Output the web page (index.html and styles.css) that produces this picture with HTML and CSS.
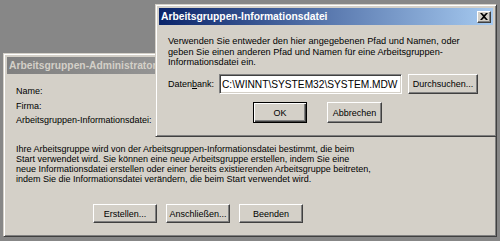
FILE: index.html
```html
<!DOCTYPE html>
<html lang="de">
<head>
    <meta charset="UTF-8">
    <title>Arbeitsgruppen-Administrator</title>
    <link rel="stylesheet" href="styles.css">
</head>
<body>
    <div class="desktop">
        <div class="window back">
            <div class="titlebar inactive"><span>Arbeitsgruppen-Administrator</span></div>
            <div class="body">
                <div class="fields">
                    <div>Name:</div>
                    <div>Firma:</div>
                    <div>Arbeitsgruppen-Informationsdatei:</div>
                </div>
                <p class="info">Ihre Arbeitsgruppe wird von der Arbeitsgruppen-Informationsdatei bestimmt, die beim<br>Start verwendet wird. Sie können eine neue Arbeitsgruppe erstellen, indem Sie eine<br>neue Informationsdatei erstellen oder einer bereits existierenden Arbeitsgruppe beitreten,<br>indem Sie die Informationsdatei verändern, die beim Start verwendet wird.</p>
                <div class="buttons back-buttons">
                    <button class="btn">Erstellen...</button>
                    <button class="btn">Anschließen...</button>
                    <button class="btn">Beenden</button>
                </div>
            </div>
        </div>

        <div class="window front">
            <div class="titlebar active">
                <span>Arbeitsgruppen-Informationsdatei</span>
                <span class="close">
                    <svg width="8" height="7" viewBox="0 0 8 7"><path d="M0 0h2l2 2 2-2h2L5 3.5 8 7H6L4 5 2 7H0l3-3.5z" fill="#000"/></svg>
                </span>
            </div>
            <div class="body">
                <p class="prompt">Verwenden Sie entweder den hier angegebenen Pfad und Namen, oder<br>geben Sie einen anderen Pfad und Namen für eine Arbeitsgruppen-<br>Informationsdatei ein.</p>
                <div class="path-row">
                    <label class="path-label" for="db">Daten<u>b</u>ank:</label>
                    <input class="field" id="db" type="text" value="C:\WINNT\SYSTEM32\SYSTEM.MDW" readonly>
                    <button class="btn browse">Durchsuchen...</button>
                </div>
                <div class="buttons front-buttons">
                    <button class="btn default ok">OK</button>
                    <button class="btn cancel">Abbrechen</button>
                </div>
            </div>
        </div>
    </div>
</body>
</html>
```

FILE: styles.css
```css
body { margin: 0; background-color: #878787; font-family: "Liberation Sans", Arial, sans-serif; font-size: 9px; color: #000; }
.desktop { position: relative; width: 500px; height: 241px; overflow: hidden; }

/* windows */
.window { position: absolute; box-sizing: border-box; display: flex; flex-direction: column; padding: 3px; background-color: #d4d0c8; border: 1px solid; border-color: #d4d0c8 #404040 #404040 #d4d0c8; box-shadow: inset 1px 1px #fff, inset -1px -1px #808080; }
.back { left: 3px; top: 53px; width: 494px; height: 184px; }
.front { left: 155px; top: 4px; width: 342px; height: 133px; }

.titlebar { height: 17px; flex: none; display: flex; align-items: center; justify-content: space-between; padding: 0 2px; font-size: 10.3px; font-weight: bold; white-space: nowrap; overflow: hidden; }
.active { background: linear-gradient(to right, #0a246a, #a6caf0); color: #fff; }
.inactive { background: linear-gradient(to right, #808080, #c0c0c0); color: #d4d0c8; }
.close { width: 14px; height: 12px; box-sizing: border-box; display: flex; align-items: center; justify-content: center; background-color: #d4d0c8; border: 1px solid; border-color: #fff #404040 #404040 #fff; box-shadow: inset -1px -1px #808080; }

.body { padding: 0 9px; }
p { margin: 0; }

/* back dialog */
.back .body { padding-top: 10px; }
.fields div { line-height: 14.5px; }
.info { margin-top: 16px; line-height: 10px; white-space: nowrap; }
.buttons { display: flex; }
.back-buttons { margin-top: 20.5px; padding-left: 77px; gap: 9px; }
.back-buttons .btn { width: 64px; height: 19px; }

/* front dialog */
.front .body { padding-top: 11px; }
.prompt { font-size: 9.2px; line-height: 10.5px; white-space: nowrap; }
.path-row { display: flex; align-items: center; margin-top: 6.5px; height: 20px; }
.path-label { width: 51px; flex: none; }
.field { width: 183px; height: 20px; box-sizing: border-box; margin: 0; padding: 0 2px; font-family: inherit; font-size: 10.2px; color: #000; background-color: #fff; border: 1px solid; border-color: #808080 #fff #fff #808080; box-shadow: inset 1px 1px #404040, inset -1px -1px #d4d0c8; outline: none; }
.browse { width: 70px; height: 20px; margin-left: 6px; }
.front-buttons { margin-top: 8px; }
.ok { width: 54px; height: 21px; margin-left: 85px; }
.cancel { width: 55px; height: 21px; margin-left: 20px; }

/* buttons */
.btn { box-sizing: border-box; padding: 0; font-family: inherit; font-size: 9px; color: #000; background-color: #d4d0c8; border: 1px solid; border-color: #fff #404040 #404040 #fff; box-shadow: inset -1px -1px #808080; }
.btn.default { border-color: #000; box-shadow: inset 1px 1px #fff, inset -1px -1px #404040, inset -2px -2px #808080; }
```
